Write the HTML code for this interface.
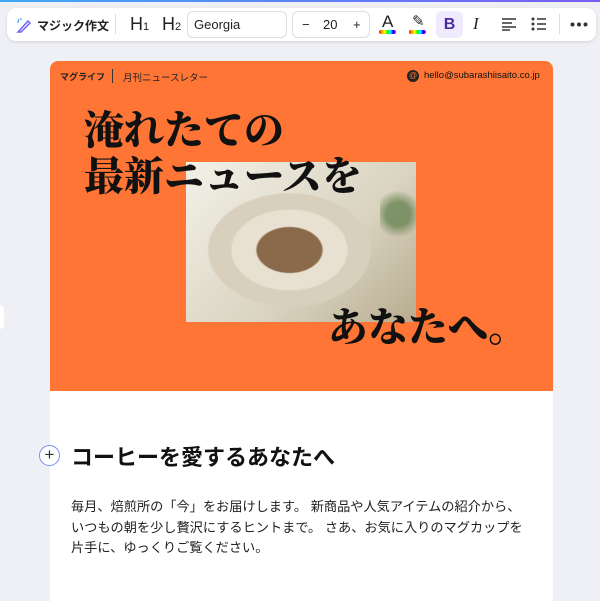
<!DOCTYPE html>
<html><head><meta charset="utf-8"><style>
*{margin:0;padding:0;box-sizing:border-box}
body{width:600px;height:588px;overflow:hidden;background:#eff0f5;font-family:"Liberation Sans","Noto Sans CJK JP",sans-serif;position:relative}
.topline{position:absolute;left:0;top:0;width:600px;height:2px;background:linear-gradient(90deg,#3fa9f5,#7b5cf5)}
.tb{position:absolute;left:7px;top:8px;width:589px;height:33px;background:#fff;border-radius:9px;box-shadow:0 1px 3px rgba(0,0,0,.12);font-size:13px;color:#222}
.tb>*{position:absolute}
.box{border:1px solid #dcdde3;border-radius:6px;height:27px;top:3px}
.card{position:absolute;left:50px;top:61px;width:503px;height:540px;background:#fff;border-radius:8px 8px 0 0;overflow:hidden}
.orange{position:absolute;left:0;top:0;width:503px;height:330px;background:#fe7535}
.big{position:absolute;font-family:"Noto Serif CJK SC","Liberation Serif",serif;font-weight:900;font-size:40px;color:#111;line-height:46px;white-space:nowrap}
</style></head><body>
<div class="topline"></div>
<div class="tb">
 <svg style="left:8px;top:8px" width="18" height="18" viewBox="0 0 18 18"><path d="M4 15 L13 5 L15 7 L6 16 L3 16Z" fill="none" stroke="#6a5cf5" stroke-width="1.4"/><path d="M3 3l1 2M6 2v2M2 6h2" stroke="#3fa9f5" stroke-width="1.2"/></svg>
 <span style="left:30px;top:9px;font-weight:bold;font-size:12px">マジック作文</span>
 <span style="left:108px;top:6px;width:1px;height:20px;background:#ddd"></span>
 <span style="left:123px;top:6px;font-size:18px">H<small style="font-size:11px">1</small></span>
 <span style="left:155px;top:6px;font-size:18px">H<small style="font-size:11px">2</small></span>
 <div class="box" style="left:180px;width:100px"><span style="position:absolute;left:6px;top:5px;font-size:13px">Georgia</span></div>
 <div class="box" style="left:285px;width:78px;font-size:13px"><span style="position:absolute;left:9px;top:5px">−</span><span style="position:absolute;left:30px;top:5px">20</span><span style="position:absolute;left:60px;top:5px">+</span></div>
 <span style="left:375px;top:4px;font-size:17px">A</span><span style="left:372px;top:22px;width:17px;height:4px;border-radius:2px;background:linear-gradient(90deg,red,orange,yellow,lime,cyan,blue,magenta)"></span>
 <span style="left:405px;top:4px;font-size:15px">✎</span><span style="left:402px;top:22px;width:17px;height:4px;border-radius:2px;background:linear-gradient(90deg,red,orange,yellow,lime,cyan,blue,magenta)"></span>
 <span style="left:429px;top:3px;width:27px;height:27px;border-radius:6px;background:#efeafd;color:#4b2d9f;font-weight:bold;font-size:16px;text-align:center;line-height:27px">B</span>
 <span style="left:466px;top:6px;font-size:17px;font-family:'Liberation Serif',serif;font-style:italic">I</span>
 <svg style="left:494px;top:9px" width="16" height="14"><path d="M1 2h14M1 6h10M1 10h14M1 13h8" stroke="#333" stroke-width="1.4"/></svg>
 <svg style="left:524px;top:8px" width="16" height="16"><circle cx="2" cy="3" r="1.5" fill="#333"/><circle cx="2" cy="8" r="1.5" fill="#333"/><circle cx="2" cy="13" r="1.5" fill="#333"/><path d="M6 3h9M6 8h9M6 13h9" stroke="#333" stroke-width="1.4"/></svg>
 <span style="left:552px;top:6px;width:1px;height:20px;background:#ddd"></span>
 <svg style="left:563px;top:14px" width="18" height="5"><circle cx="2.5" cy="2.5" r="2" fill="#333"/><circle cx="9" cy="2.5" r="2" fill="#333"/><circle cx="15.5" cy="2.5" r="2" fill="#333"/></svg>
</div>
<div style="position:absolute;left:-6px;top:305px;width:10px;height:24px;background:#fff;border-radius:4px"></div>
<div class="card">
 <div class="orange">
  <span style="position:absolute;left:10px;top:9px;font-size:9px;font-weight:bold;color:#222">マグライフ</span>
  <span style="position:absolute;left:62px;top:8px;width:1px;height:14px;background:#333"></span>
  <span style="position:absolute;left:73px;top:9px;font-size:9.5px;color:#222">月刊ニュースレター</span>
  <span style="position:absolute;left:357px;top:9px;width:12px;height:12px;border-radius:50%;background:#222;color:#fe7535;font-size:8px;text-align:center;line-height:12px">@</span>
  <span style="position:absolute;left:374px;top:9px;font-size:9.5px;color:#111">hello@subarashiisaito.co.jp</span>
  <div style="position:absolute;left:136px;top:101px;width:230px;height:160px;background:radial-gradient(ellipse at 45% 55%,#8a6a4a 0 18%,#e8e0d0 19% 32%,#d8d0bc 33% 45%,transparent 46%),linear-gradient(135deg,#f3f1e8,#d9d3c0 60%,#b8ac90)"></div>
  <div style="position:absolute;left:330px;top:118px;width:36px;height:70px;background:radial-gradient(circle,#5a7a45 30%,transparent 60%);opacity:.7"></div>
  <div class="big" style="left:34px;top:44px">淹れたての</div>
  <div class="big" style="left:34px;top:90px">最新ニュースを</div>
  <div class="big" style="left:278px;top:241px">あなたへ。</div>
 </div>
 <div style="position:absolute;left:21px;top:379px;font-size:22px;font-weight:bold;color:#111">コーヒーを愛するあなたへ</div>
 <div style="position:absolute;left:21px;top:436px;width:490px;font-size:13.2px;line-height:20.5px;color:#222;white-space:nowrap">毎月、焙煎所の「今」をお届けします。 新商品や人気アイテムの紹介から、<br>いつもの朝を少し贅沢にするヒントまで。 さあ、お気に入りのマグカップを<br>片手に、ゆっくりご覧ください。</div>
</div>
<div style="position:absolute;left:39px;top:445px;width:21px;height:21px;border-radius:50%;background:#fff;border:1.5px solid #7a8ef0;text-align:center;line-height:17px;font-size:17px;color:#333">+</div>
</body></html>
